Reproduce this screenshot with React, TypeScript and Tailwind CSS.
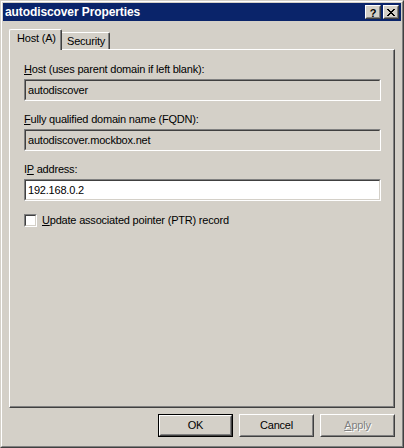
import React from "react";

const font = "font-['Liberation_Sans',Arial,sans-serif]";

function Sunken({ children, white = false, className = "" }: { children?: React.ReactNode; white?: boolean; className?: string }) {
  return (
    <div className={`border border-t-[#808080] border-l-[#808080] border-b-white border-r-white ${className}`}>
      <div
        className={`h-full border border-t-[#404040] border-l-[#404040] border-b-[#d4d0c8] border-r-[#d4d0c8] ${
          white ? "bg-white" : "bg-[#d4d0c8]"
        }`}
      >
        {children}
      </div>
    </div>
  );
}

function Field({ label, value, white = false }: { label: React.ReactNode; value: string; white?: boolean }) {
  return (
    <div className="flex flex-col">
      <div className="h-[13px] leading-[13px] text-[11px] tracking-[-0.2px] text-black">{label}</div>
      <Sunken white={white} className="mt-[3px] w-[357px] h-[22px]">
        <div className="h-full pl-[2px] leading-[18px] text-[11px] tracking-[-0.2px] text-black">{value}</div>
      </Sunken>
    </div>
  );
}

function Button({ children, isDefault = false, disabled = false }: { children: React.ReactNode; isDefault?: boolean; disabled?: boolean }) {
  const inner = (
    <div className="h-full border border-t-white border-l-white border-b-[#404040] border-r-[#404040]">
      <div className="h-full border border-t-[#d4d0c8] border-l-[#d4d0c8] border-b-[#808080] border-r-[#808080] flex items-center justify-center">
        <span
          className={`text-[11px] leading-[13px] tracking-[-0.2px] ${
            disabled ? "text-[#808080] [text-shadow:1px_1px_0_#ffffff]" : "text-black"
          }`}
        >
          {children}
        </span>
      </div>
    </div>
  );
  if (isDefault) {
    return <div className="w-[75px] h-[23px] border border-black">{inner}</div>;
  }
  return <div className="w-[75px] h-[23px]">{inner}</div>;
}

function TitleButton({ children }: { children: React.ReactNode }) {
  return (
    <div className="w-[16px] h-[14px] border border-t-white border-l-white border-b-[#404040] border-r-[#404040]">
      <div className="h-full border border-t-[#d4d0c8] border-l-[#d4d0c8] border-b-[#808080] border-r-[#808080] bg-[#d4d0c8] flex items-center justify-center">
        {children}
      </div>
    </div>
  );
}

export default function App() {
  return (
    <div className={`${font} w-[404px] h-[448px] bg-[#d4d0c8] select-none`}>
      <div className="w-full h-full border border-t-[#d4d0c8] border-l-[#d4d0c8] border-b-[#404040] border-r-[#404040]">
        <div className="w-full h-full border border-t-white border-l-white border-b-[#808080] border-r-[#808080] p-[1px] flex flex-col">
          {/* Title bar */}
          <div className="h-[18px] bg-[#0a246a] flex items-center justify-between pl-[2px] pr-[2px]">
            <span className="text-white font-bold text-[12px] leading-[14px] tracking-[-0.1px]">autodiscover Properties</span>
            <div className="flex items-center gap-[2px]">
              <TitleButton>
                <span className="text-black font-bold text-[11px] leading-[10px] mt-[1px]">?</span>
              </TitleButton>
              <TitleButton>
                <svg width="8" height="7" viewBox="0 0 8 7" shapeRendering="crispEdges">
                  <path
                    d="M0 0h2v1H0zM6 0h2v1H6zM1 1h2v1H1zM5 1h2v1H5zM2 2h4v1H2zM3 3h2v1H3zM2 4h4v1H2zM1 5h2v1H1zM5 5h2v1H5zM0 6h2v1H0zM6 6h2v1H6z"
                    fill="#000"
                  />
                </svg>
              </TitleButton>
            </div>
          </div>

          {/* Body */}
          <div className="flex flex-col mt-[8px] mx-[6px]">
            {/* Tabs */}
            <div className="flex items-end h-[20px]">
              <div className="relative z-10 -mb-[1px] w-[53px] h-[21px] bg-[#d4d0c8] border-t border-l border-t-white border-l-white border-r border-r-[#404040] rounded-tl-[2px] rounded-tr-[2px]">
                <div className="h-full border-r border-r-[#808080] pl-[7px] pt-[2px] text-[11px] leading-[13px] tracking-[-0.2px] text-black">
                  Host (A)
                </div>
              </div>
              <div className="w-[48px] h-[17px] border-t border-t-white border-r border-r-[#404040] rounded-tr-[2px]">
                <div className="h-full border-r border-r-[#808080] pl-[5px] pt-[2px] text-[11px] leading-[13px] tracking-[-0.2px] text-black">
                  Security
                </div>
              </div>
            </div>

            {/* Panel */}
            <div className="h-[359px] border-t border-l border-t-white border-l-white border-r border-b border-r-[#404040] border-b-[#404040]">
              <div className="h-full border-r border-b border-r-[#808080] border-b-[#808080] pl-[14px] pt-[13px] flex flex-col">
                <Field
                  label={
                    <>
                      <span className="underline underline-offset-[1px]">H</span>ost (uses parent domain if left blank):
                    </>
                  }
                  value="autodiscover"
                />
                <div className="mt-[12px]">
                  <Field
                    label={
                      <>
                        <span className="underline underline-offset-[1px]">F</span>ully qualified domain name (FQDN):
                      </>
                    }
                    value="autodiscover.mockbox.net"
                  />
                </div>
                <div className="mt-[12px]">
                  <Field
                    label={
                      <>
                        I<span className="underline underline-offset-[1px]">P</span> address:
                      </>
                    }
                    value="192.168.0.2"
                    white
                  />
                </div>
                <div className="mt-[13px] flex items-center">
                  <Sunken white className="w-[13px] h-[13px]" />
                  <span className="ml-[5px] text-[11px] leading-[13px] tracking-[-0.2px] text-black">
                    <span className="underline underline-offset-[1px]">U</span>pdate associated pointer (PTR) record
                  </span>
                </div>
              </div>
            </div>

            {/* Buttons */}
            <div className="mt-[6px] flex justify-end gap-[6px]">
              <Button isDefault>OK</Button>
              <Button>Cancel</Button>
              <Button disabled>
                <span className="underline underline-offset-[1px]">A</span>pply
              </Button>
            </div>
          </div>
        </div>
      </div>
    </div>
  );
}
